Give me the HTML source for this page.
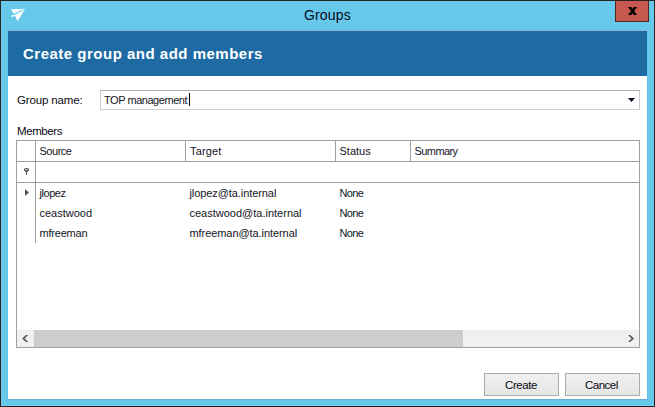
<!DOCTYPE html>
<html lang="en">
<head>
<meta charset="utf-8">
<title>Groups</title>
<style>
  html, body { margin: 0; padding: 0; }
  body {
    width: 655px; height: 407px; overflow: hidden; position: relative;
    background: #66c8ea;
    font-family: "Liberation Sans", sans-serif;
    color: #000;
  }
  .abs { position: absolute; }
  .t { position: absolute; white-space: nowrap; line-height: 1; }

  /* window chrome */
  #frame { left: 0; top: 0; width: 653px; height: 405px; border: 1px solid #2a2022; background: #66c8ea; box-shadow: inset 0 -1px 0 0 #6dd6f7, inset 0 0 0 1px #69cef0; }
  #title { left: 304px; top: 8px; font-size: 15px; color: #0b0b1e; }
  #close { left: 615px; top: 1px; width: 32px; height: 20px; background: #c75850; border: 1px solid #4d2523; border-top: 0; }
  #banner { left: 8px; top: 31px; width: 639px; height: 45px; background: #1e6ba3; }
  #bannerline { left: 7px; top: 30px; width: 641px; height: 1px; background: #8fb0cc; }
  #btitle { left: 23px; top: 46px; font-size: 15px; letter-spacing: 0.5px; font-weight: bold; color: #fff; }
  #content { left: 8px; top: 76px; width: 639px; height: 323px; background: #fff; }

  /* form */
  .lbl { font-size: 12px; color: #0a0a14; }
  #input { left: 100px; top: 90px; width: 538px; height: 18px; border: 1px solid; border-color: #abadb3 #c6c8d4 #cdd0da #c6c8d4; background: #fff; }
  .cell { font-size: 11px; color: #14141e; }

  /* grid */
  #grid { left: 16px; top: 140px; width: 622px; height: 206px; border: 1px solid #a0a0a0; background: #fff; }
  .hl { position: absolute; height: 1px; background: #a0a0a0; }
  .vl { position: absolute; width: 1px; background: #a0a0a0; }

  /* buttons */
  .btn { position: absolute; top: 373px; width: 73px; height: 21px; border: 1px solid #acacac;
         background: linear-gradient(#f0f0f0, #e5e5e5); }

  /* per-element width tuning */
  #title { font-size: 14px; letter-spacing: 0.15px; }
  .lbl { font-size: 11.5px; }
  #l1 { letter-spacing: -0.14px; }
  #l2 { letter-spacing: -0.42px; }
  #inp { letter-spacing: -0.46px; }
  #h1 { letter-spacing: -0.48px; }
  #h2 { letter-spacing: 0.16px; }
  #h4 { letter-spacing: -0.58px; }
  #r1a { letter-spacing: -0.46px; }
  #r1b { letter-spacing: -0.08px; }
  #r1c, #r2c, #r3c { letter-spacing: -0.67px; }
  #r3a { letter-spacing: -0.2px; }
  #r3b { letter-spacing: -0.07px; }
  #b1 { letter-spacing: -0.4px; }
  #b2 { letter-spacing: -0.52px; }
</style>
</head>
<body>
  <div id="frame" class="abs"></div>

  <!-- app icon -->
  <svg class="abs" style="left:8px;top:6px" width="20" height="18" viewBox="8 6 20 18">
    <path d="M10.9 9.2 L25.2 8.8 L17.6 21.2 L14.8 15.6 Z" fill="#fff"/>
    <path d="M11.6 16.5 L16 14.3" stroke="#fff" stroke-width="1.4" fill="none"/>
    <path d="M13.2 13.9 L24.6 9.4" stroke="#66c8ea" stroke-width="0.8" fill="none"/>
    <path d="M13.6 15.4 L22 10.9" stroke="#66c8ea" stroke-width="0.8" fill="none"/>
  </svg>

  <div id="title" class="t">Groups</div>

  <div id="close" class="abs"></div>
  <svg class="abs" style="left:626px;top:5px" width="13" height="12" viewBox="626 5 13 12">
    <path d="M628 7 L631.2 7 L637 15 L633.8 15 Z M633.8 7 L637 7 L631.2 15 L628 15 Z" fill="#000"/>
  </svg>

  <div class="abs" style="left:7px;top:30px;width:641px;height:370px;background:#5bc4e8"></div>
  <div class="abs" style="left:7px;top:399px;width:641px;height:1px;background:#66b0d5"></div>
  <div id="bannerline" class="abs"></div>
  <div id="banner" class="abs"></div>
  <div id="btitle" class="t">Create group and add members</div>

  <div id="content" class="abs"></div>

  <div class="t lbl" style="left:17px;top:95px" id="l1">Group name:</div>
  <div id="input" class="abs"></div>
  <div class="t cell" style="left:104px;top:95px" id="inp">TOP management</div>
  <div class="abs" id="caret" style="left:189px;top:93px;width:1px;height:13px;background:#000"></div>
  <svg class="abs" style="left:628px;top:98px" width="7" height="4" viewBox="0 0 7 4">
    <path d="M0 0 L7 0 L3.5 4 Z" fill="#15102a"/>
  </svg>

  <div class="t lbl" style="left:17px;top:126px" id="l2">Members</div>

  <div id="grid" class="abs"></div>
  <!-- horizontal lines -->
  <div class="hl" style="left:17px;top:161px;width:622px"></div>
  <div class="hl" style="left:17px;top:182px;width:622px"></div>
  <!-- vertical lines -->
  <div class="vl" style="left:35px;top:141px;height:102px"></div>
  <div class="vl" style="left:185px;top:141px;height:20px"></div>
  <div class="vl" style="left:335px;top:141px;height:20px"></div>
  <div class="vl" style="left:410px;top:141px;height:20px"></div>

  <!-- header text -->
  <div class="t cell" style="left:39.5px;top:146px" id="h1">Source</div>
  <div class="t cell" style="left:190px;top:146px" id="h2">Target</div>
  <div class="t cell" style="left:339.5px;top:146px" id="h3">Status</div>
  <div class="t cell" style="left:414.5px;top:146px" id="h4">Summary</div>

  <!-- filter icon -->
  <svg class="abs" style="left:20px;top:164px" width="14" height="14" viewBox="20 164 14 14">
    <path d="M24.2 170 L26.5 173.2 L28.8 170 Z" fill="#5a5a5a"/>
    <ellipse cx="26.5" cy="169.6" rx="2.1" ry="1.1" fill="#e8e8e8" stroke="#484848" stroke-width="1.1"/>
    <rect x="26" y="172" width="1" height="3" fill="#484848"/>
  </svg>

  <!-- row indicator -->
  <svg class="abs" style="left:25px;top:189px" width="4" height="7" viewBox="0 0 4 7">
    <path d="M0 0 L4 3.5 L0 7 Z" fill="#555"/>
  </svg>

  <!-- rows -->
  <div class="t cell" style="left:39.5px;top:188px" id="r1a">jlopez</div>
  <div class="t cell" style="left:189.5px;top:188px" id="r1b">jlopez@ta.internal</div>
  <div class="t cell" style="left:339.5px;top:188px" id="r1c">None</div>

  <div class="t cell" style="left:39.5px;top:208px" id="r2a">ceastwood</div>
  <div class="t cell" style="left:189.5px;top:208px" id="r2b">ceastwood@ta.internal</div>
  <div class="t cell" style="left:339.5px;top:208px" id="r2c">None</div>

  <div class="t cell" style="left:39.5px;top:228px" id="r3a">mfreeman</div>
  <div class="t cell" style="left:189.5px;top:228px" id="r3b">mfreeman@ta.internal</div>
  <div class="t cell" style="left:339.5px;top:228px" id="r3c">None</div>

  <!-- scrollbar -->
  <div class="abs" style="left:17px;top:330px;width:622px;height:17px;background:#f0f0f0"></div>
  <div class="abs" style="left:34px;top:330px;width:429px;height:17px;background:#cdcdcd"></div>
  <svg class="abs" style="left:20px;top:333px" width="11" height="11" viewBox="20 333 11 11">
    <path d="M26 335 L28.2 335 L24.7 338.5 L28.2 342 L26 342 L22 338.5 Z" fill="#5e5e5e"/>
  </svg>
  <svg class="abs" style="left:626px;top:333px" width="11" height="11" viewBox="626 333 11 11">
    <path d="M628 335 L630.2 335 L634.2 338.5 L630.2 342 L628 342 L631.5 338.5 Z" fill="#5e5e5e"/>
  </svg>

  <!-- buttons -->
  <div class="btn" style="left:484px"></div>
  <div class="btn" style="left:565px"></div>
  <div class="t lbl" style="left:505px;top:380px" id="b1">Create</div>
  <div class="t lbl" style="left:585px;top:380px" id="b2">Cancel</div>
</body>
</html>
